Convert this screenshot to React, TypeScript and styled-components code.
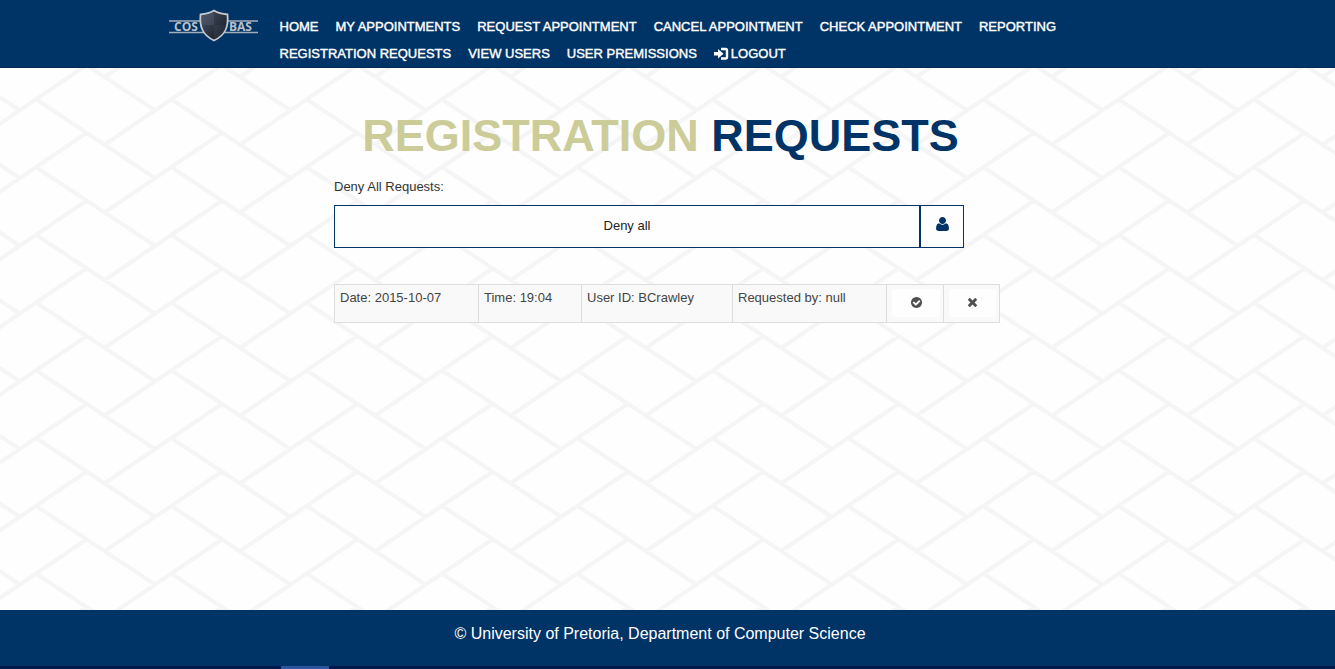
import React from "react";
import styled, { createGlobalStyle } from "styled-components";

const navy = "#003366";

/* Herringbone backdrop: a repeating brick joint, three across and four down per tile. */
const joints: string[] = [];
for (let c = -2; c <= 4; c++) {
  for (let r = -3; r <= 6; r++) {
    const x = (c * 406) / 3;
    const y = (r * 271) / 4;
    joints.push(`M${37 + x} ${32 + y}l118 78M${104 + x} ${77 + y}l118 -80`);
  }
}
const backdrop = encodeURIComponent(
  `<svg xmlns="http://www.w3.org/2000/svg" width="406" height="271"><path d="${joints.join("")}" fill="none" stroke="#f5f5f5" stroke-width="4"/></svg>`
);

const GlobalStyle = createGlobalStyle`
  * { box-sizing: border-box; }
  body {
    margin: 0;
    background: #fefefe;
    color: #333;
    font: 13px/20px "Liberation Sans", Arial, sans-serif;
  }
`;

const Page = styled.div`
  display: flex;
  flex-direction: column;
  min-height: 100vh;
`;

const Header = styled.header`
  background: ${navy};
  border-bottom: 1px solid #002b57;
`;

const HeaderInner = styled.div`
  display: flex;
  align-items: flex-start;
  gap: 22px;
  max-width: 1000px;
  margin: 0 auto;
  padding-top: 9px;
`;

const Brand = styled.a`
  flex: none;
  display: block;
  height: 34px;
`;

const NavList = styled.ul`
  display: flex;
  flex-wrap: wrap;
  column-gap: 17px;
  max-width: 800px;
  margin: 0;
  padding: 4px 0 0;
  list-style: none;
`;

const NavLink = styled.a`
  display: flex;
  align-items: center;
  gap: 2px;
  color: #fff;
  font-size: 13px;
  line-height: 27px;
  -webkit-text-stroke: 0.4px #fff;
  text-decoration: none;
  white-space: nowrap;
`;

const Main = styled.main`
  flex: 1;
  padding: 39px 16px;
  background: url("data:image/svg+xml,${backdrop}") 0 0;
`;

const Content = styled.div`
  max-width: 667px;
  margin: 0 auto;
`;

const Title = styled.h1`
  margin: 0 0 12px;
  padding-right: 14px;
  color: ${navy};
  font-size: 45px;
  line-height: 58px;
  text-align: center;
  white-space: nowrap;

  span { color: #cccc99; }
`;

const Label = styled.label`
  display: block;
  margin-bottom: 8px;
`;

const DenyGroup = styled.div`
  display: flex;
  max-width: 630px;
  height: 43px;
  margin-bottom: 36px;
`;

const DenyButton = styled.button`
  flex: 1;
  padding: 0 6px 2px;
  border: 1px solid ${navy};
  background: #fefefe;
  color: #222;
  font: inherit;
`;

const Addon = styled.span`
  display: flex;
  align-items: center;
  justify-content: center;
  width: 44px;
  padding-bottom: 6px;
  border: 1px solid ${navy};
  background: #fefefe;
  color: ${navy};
`;

const Requests = styled.table`
  width: 100%;
  max-width: 666px;
  border-collapse: collapse;
  table-layout: fixed;
  background: #f9f9f9;
  color: #444;
`;

const Cell = styled.td<{ $width: number }>`
  width: ${(p) => p.$width}px;
  height: 38px;
  padding: 3px 5px;
  border: 1px solid #ddd;
  vertical-align: top;
`;

const ActionCell = styled(Cell)`
  padding: 4px 3px 4px 5px;
`;

const IconButton = styled.button`
  display: flex;
  align-items: center;
  justify-content: center;
  width: 100%;
  height: 28px;
  padding: 0 0 2px;
  border: 0;
  border-radius: 3px;
  background: #fefefe;
  color: #505050;
`;

const Footer = styled.footer`
  height: 56px;
  padding: 12px 15px 0 0;
  background: ${navy};
  color: #fff;
  font-size: 16px;
  line-height: 24px;
  text-align: center;
`;

const BottomStrip = styled.div`
  height: 3px;
  padding-left: 281px;
  background: #001a4d;

  &::before {
    content: "";
    display: block;
    width: 48px;
    height: 3px;
    background: #2f549f;
  }
`;

const links = [
  "Home",
  "My Appointments",
  "Request Appointment",
  "Cancel Appointment",
  "Check Appointment",
  "Reporting",
  "Registration Requests",
  "View Users",
  "User Premissions",
];

function Logo() {
  return (
    <svg width="90" height="34" viewBox="0 0 90 34" role="img" aria-label="COS BAS">
      <defs>
        <linearGradient id="shield" x1="0" y1="0" x2="1" y2="1">
          <stop offset="0" stopColor="#4b5668" />
          <stop offset="1" stopColor="#10141e" />
        </linearGradient>
      </defs>
      <path d="M1 12h89M1 23.500h89" stroke="#a3afbd" strokeWidth="1.500" />
      <g fill="#b9c0c9" fontFamily="Open Sans, sans-serif" fontWeight="700" fontSize="12">
        <text x="6" y="22">COS</text>
        <text x="61" y="22">BAS</text>
      </g>
      <path
        d="M46 1.500C42 4 38 5 32.500 5.500C31.500 17 34 26 46 31.500C58 26 60.500 17 59.500 5.500C54 5 50 4 46 1.500Z"
        fill="url(#shield)"
        stroke="#c6cacf"
        strokeWidth="1.800"
      />
      <path d="M46 3.500V16H34C33.500 13 33.500 10 34 7C39 6.500 42 5.500 46 3.500Z" fill="#5b6575" opacity=".35" />
      <path d="M46 16H58.500C57.500 22 54 26.500 46 30Z" fill="#3d4757" opacity=".35" />
    </svg>
  );
}

function LogoutIcon() {
  return (
    <svg width="15" height="14" viewBox="0 0 15 14" aria-hidden="true">
      <path d="M0 5h4V2l5.500 4.800L4 11.500V8.500H0Z" fill="#fff" />
      <path d="M7 2h4.500Q13 2 13 3.500v6.500Q13 11.500 11.500 11.500H7" fill="none" stroke="#fff" strokeWidth="2.400" />
    </svg>
  );
}

function UserIcon() {
  return (
    <svg width="13" height="14" viewBox="0 256 1408 1536" fill="currentColor" aria-hidden="true">
      <path d="M1408 1533q0 120-73 189.500t-194 69.500h-874q-121 0-194-69.500t-73-189.500q0-53 3.500-103.500t14-109 26.500-108.500 43-97.500 62-81 85.500-53.500 111.500-20q9 0 42 21.500t74.500 48 108 48 133.500 21.500 133.500-21.500 108-48 74.500-48 42-21.500q61 0 111.500 20t85.500 53.500 62 81 43 97.500 26.500 108.500 14 109 3.500 103.500zm-320-893q0 159-112.500 271.500t-271.500 112.500-271.500-112.500-112.500-271.500 112.500-271.500 271.500-112.500 271.500 112.500 112.500 271.500z" />
    </svg>
  );
}

function ApproveIcon() {
  return (
    <svg width="11" height="11" viewBox="0 128 1536 1536" fill="currentColor" aria-hidden="true">
      <path d="M1284 734q0-28-18-46l-91-90q-19-19-45-19t-45 19l-408 407-226-226q-19-19-45-19t-45 19l-91 90q-18 18-18 46 0 27 18 45l362 362q19 19 45 19 27 0 46-19l543-543q18-18 18-45zm252 162q0 209-103 385.500t-279.500 279.500-385.500 103-385.500-103-279.500-279.500-103-385.500 103-385.500 279.500-279.500 385.500-103 385.500 103 279.500 279.500 103 385.500z" />
    </svg>
  );
}

function RejectIcon() {
  return (
    <svg width="9" height="9" viewBox="110 366 1188 1188" fill="currentColor" aria-hidden="true">
      <path d="M1298 1322q0 40-28 68l-136 136q-28 28-68 28t-68-28l-294-294-294 294q-28 28-68 28t-68-28l-136-136q-28-28-28-68t28-68l294-294-294-294q-28-28-28-68t28-68l136-136q28-28 68-28t68 28l294 294 294-294q28-28 68-28t68 28l136 136q28 28 28 68t-28 68l-294 294 294 294q28 28 28 68z" />
    </svg>
  );
}

export default function App() {
  return (
    <Page>
      <GlobalStyle />
      <Header>
        <HeaderInner>
          <Brand href="#home">
            <Logo />
          </Brand>
          <nav>
            <NavList>
              {links.map((name) => (
                <li key={name}>
                  <NavLink href="#">{name.toUpperCase()}</NavLink>
                </li>
              ))}
              <li>
                <NavLink href="#">
                  <LogoutIcon />
                  LOGOUT
                </NavLink>
              </li>
            </NavList>
          </nav>
        </HeaderInner>
      </Header>
      <Main>
        <Content>
          <Title>
            <span>REGISTRATION</span> REQUESTS
          </Title>
          <Label htmlFor="deny-all">Deny All Requests:</Label>
          <DenyGroup>
            <DenyButton id="deny-all" type="button">
              Deny all
            </DenyButton>
            <Addon>
              <UserIcon />
            </Addon>
          </DenyGroup>
          <Requests>
            <tbody>
              <tr>
                <Cell $width={144}>Date: 2015-10-07</Cell>
                <Cell $width={103}>Time: 19:04</Cell>
                <Cell $width={151}>User ID: BCrawley</Cell>
                <Cell $width={154}>Requested by: null</Cell>
                <ActionCell $width={57}>
                  <IconButton type="button" aria-label="Approve request">
                    <ApproveIcon />
                  </IconButton>
                </ActionCell>
                <ActionCell $width={56}>
                  <IconButton type="button" aria-label="Deny request">
                    <RejectIcon />
                  </IconButton>
                </ActionCell>
              </tr>
            </tbody>
          </Requests>
        </Content>
      </Main>
      <Footer>© University of Pretoria, Department of Computer Science</Footer>
      <BottomStrip />
    </Page>
  );
}
